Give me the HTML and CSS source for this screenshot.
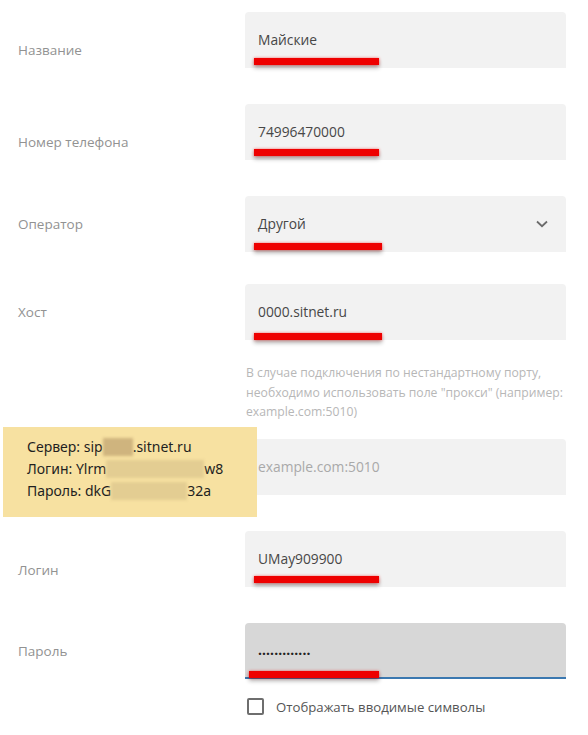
FILE: index.html
```html
<!DOCTYPE html>
<html lang="ru">
<head>
<meta charset="utf-8">
<title>Форма</title>
<link rel="stylesheet" href="styles.css">
</head>
<body>
<div class="page">
  <div class="row">
    <div class="label">Название</div>
    <div class="field"><span class="value">Майские</span><span class="mark"></span></div>
  </div>
  <div class="row row--loose">
    <div class="label">Номер телефона</div>
    <div class="field"><span class="value">74996470000</span><span class="mark mark--low1"></span></div>
  </div>
  <div class="row row--tight">
    <div class="label label--mid">Оператор</div>
    <div class="field field--select">
      <span class="value">Другой</span>
      <svg class="chevron" width="12" height="8" viewBox="0 0 12 8"><path d="M1 1.5 L6 6.2 L11 1.5" fill="none" stroke="#6b6b6b" stroke-width="1.8"/></svg>
      <span class="mark mark--wide"></span>
    </div>
  </div>
  <div class="row row--helper">
    <div class="label label--mid">Хост</div>
    <div class="control">
      <div class="field"><span class="value">0000.sitnet.ru</span><span class="mark mark--wide mark--low"></span></div>
      <p class="helper">В случае подключения по нестандартному порту, необходимо использовать поле "прокси" (например: example.com:5010)</p>
    </div>
  </div>
  <div class="row">
    <div class="label"></div>
    <div class="field"><span class="placeholder">example.com:5010</span></div>
  </div>
  <div class="row">
    <div class="label label--low">Логин</div>
    <div class="field"><span class="value">UMay909900</span><span class="mark mark--up"></span></div>
  </div>
  <div class="row row--last">
    <div class="label label--mid">Пароль</div>
    <div class="control">
      <div class="field field--active"><span class="dots">.............</span><span class="mark mark--pw"></span></div>
      <div class="check">
        <span class="box"></span>
        <span class="check-text">Отображать вводимые символы</span>
      </div>
    </div>
  </div>

  <div class="tooltip">
    <div class="tip-line">Сервер: sip<span class="blur blur--s"></span>.sitnet.ru</div>
    <div class="tip-line">Логин: Ylrm<span class="blur blur--l"></span>w8</div>
    <div class="tip-line">Пароль: dkG<span class="blur blur--m"></span>32a</div>
  </div>
</div>
</body>
</html>
```

FILE: styles.css
```css
html, body {
  margin: 0;
  padding: 0;
  background: #ffffff;
}

body {
  font-family: "Open Sans", "Noto Sans", sans-serif;
}

.page {
  position: relative;
  width: 588px;
  padding-top: 12px;
}

.row {
  display: grid;
  grid-template-columns: 245px 321px;
  margin-bottom: 36px;
}

.row--tight {
  margin-bottom: 32px;
}

.row--helper {
  margin-bottom: 17px;
}

.row--last {
  margin-bottom: 0;
}

.label {
  padding: 28px 0 0 18px;
  font-size: 13.5px;
  line-height: 20px;
  color: #929292;
}

.label--mid {
  padding-top: 18px;
}

.label--low {
  padding-top: 29px;
}

.control {
  display: flex;
  flex-direction: column;
}

.field {
  position: relative;
  box-sizing: border-box;
  height: 56px;
  padding: 0 13px;
  display: flex;
  align-items: center;
  background: #f2f2f2;
  border-radius: 4px 4px 0 0;
  font-size: 13.8px;
  color: #474747;
}

.field--select {
  justify-content: space-between;
  padding-right: 18px;
}

.field--active {
  background: #d7d7d7;
  border-bottom: 2px solid #3b78b0;
}

.value {
  line-height: 20px;
}

.placeholder {
  color: #a9a9a9;
  line-height: 20px;
}

.dots {
  color: #222;
  font-weight: 700;
  letter-spacing: 0.1px;
  line-height: 20px;
}

.chevron {
  display: block;
}

.mark {
  position: absolute;
  left: 9px;
  top: 46px;
  width: 125px;
  height: 7px;
  background: #ee0000;
  box-shadow: 0 0 3px rgba(255, 0, 0, 0.55), 0 3px 4px rgba(0, 0, 0, 0.3);
}

.mark--low1 {
  top: 45px;
}

.mark--wide {
  width: 128px;
  top: 47px;
}

.mark--low {
  top: 49px;
}

.mark--up {
  top: 45px;
}

.mark--pw {
  left: 4px;
  width: 130px;
  top: 48px;
}

.helper {
  margin: 23px -6px 0 1px;
  font-size: 12.2px;
  line-height: 19.5px;
  color: #b7b7b7;
}

.check {
  display: flex;
  align-items: center;
  gap: 12px;
  margin-top: 18px;
  padding-left: 2px;
}

.box {
  box-sizing: border-box;
  width: 17px;
  height: 17px;
  border: 2px solid #6e6e6e;
  border-radius: 2px;
}

.check-text {
  font-size: 13.2px;
  line-height: 20px;
  color: #555555;
}

.tooltip {
  position: absolute;
  left: 3px;
  top: 427px;
  box-sizing: border-box;
  width: 254px;
  height: 90px;
  padding: 9px 0 0 24px;
  background: #f7e1a1;
  font-family: "Noto Sans", "Open Sans", sans-serif;
  font-size: 14px;
  line-height: 22px;
  color: #1f1f1f;
}

.tip-line {
  white-space: nowrap;
}

.blur {
  display: inline-block;
  height: 18px;
  vertical-align: -4px;
  background: #e3cd92;
  filter: blur(1.5px);
}

.blur--s {
  width: 30px;
  background: #cfb47e;
}

.blur--l {
  width: 98px;
}

.blur--m {
  width: 76px;
}
```
